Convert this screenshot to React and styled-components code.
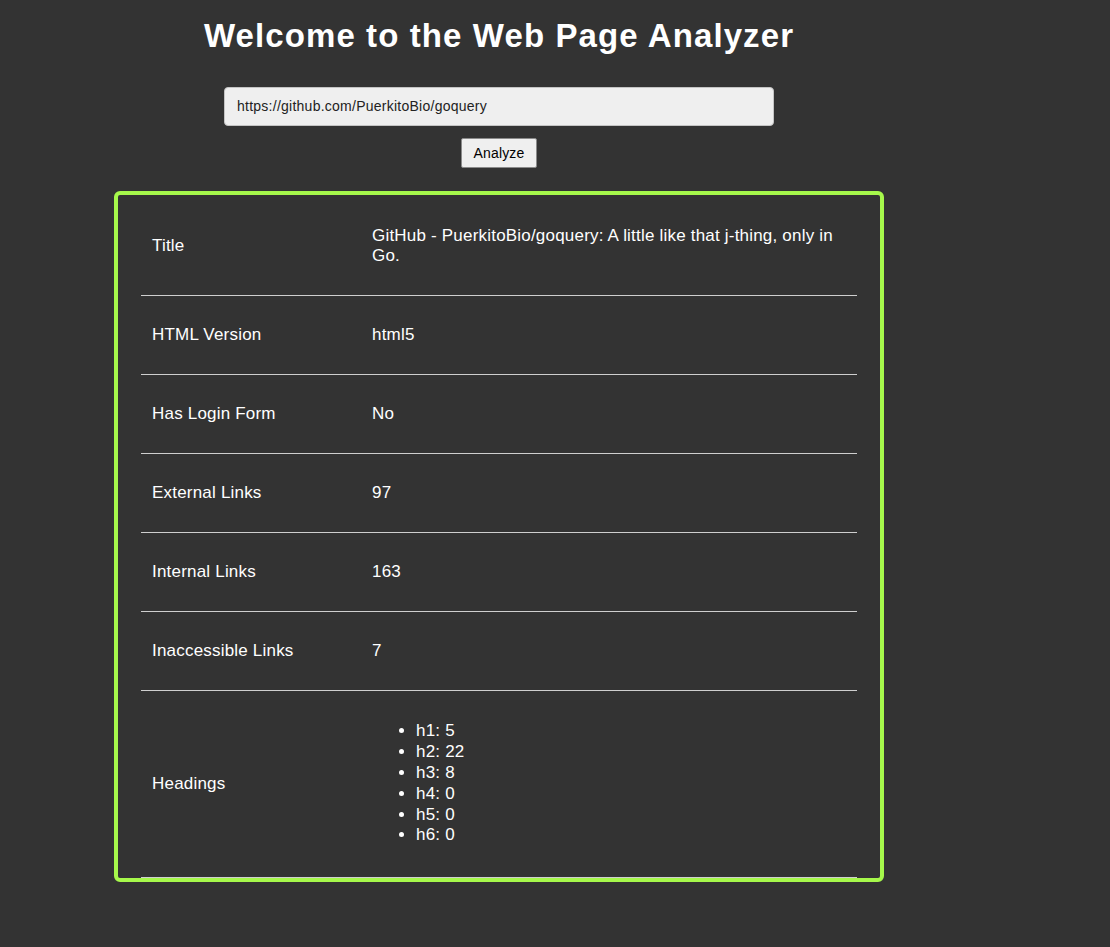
import React from "react";
import styled, { createGlobalStyle } from "styled-components";

const GlobalStyle = createGlobalStyle`
  html, body {
    margin: 0;
    padding: 0;
    background: #333333;
  }
  body {
    font-family: "Liberation Sans", Arial, Helvetica, sans-serif;
    color: #ffffff;
  }
`;

const Page = styled.div`
  width: 998px;
  min-height: 947px;
  display: flex;
  flex-direction: column;
  align-items: center;
  padding-top: 18px;
  box-sizing: border-box;
`;

const Heading = styled.h1`
  margin: 0;
  font-size: 33px;
  letter-spacing: 1.1px;
  font-weight: bold;
  line-height: 36.8px;
  color: #ffffff;
`;

const Form = styled.form`
  display: flex;
  flex-direction: column;
  align-items: center;
  gap: 12px;
  margin-top: 32px;
`;

const UrlInput = styled.input`
  box-sizing: border-box;
  width: 550px;
  height: 39px;
  padding: 0 12px;
  border: 1px solid #c4c4c4;
  border-radius: 4px;
  background: #efefef;
  color: #222222;
  font-family: "Liberation Sans", Arial, sans-serif;
  font-size: 14px;
  letter-spacing: 0.25px;
  outline: none;
`;

const Button = styled.button`
  box-sizing: border-box;
  height: 30px;
  padding: 0 12px;
  border: 1px solid #8a8a8a;
  border-radius: 2px;
  background: #efefef;
  color: #000000;
  font-family: "Liberation Sans", Arial, sans-serif;
  font-size: 14px;
  letter-spacing: 0.15px;
`;

const ResultBox = styled.div`
  box-sizing: border-box;
  width: 770px;
  margin-top: 23px;
  border: 4px solid #a6f84b;
  border-radius: 6px;
  padding: 2px 23px 0;
`;

const Table = styled.table`
  width: 100%;
  border-collapse: collapse;
  font-size: 17px;
  letter-spacing: 0.2px;
  line-height: 20px;
`;

const Row = styled.tr`
  border-bottom: 1px solid #cfcfcf;
`;

const Label = styled.td`
  width: 198px;
  padding: 29px 11px;
  vertical-align: middle;
  text-align: left;
`;

const Value = styled.td`
  padding: 29px 11px;
  vertical-align: middle;
  text-align: left;
`;

const List = styled.ul`
  margin: 1.6px 0;
  padding-left: 44px;
  list-style: disc;
`;

const Item = styled.li`
  line-height: 20.8px;
`;

const rows = [
  ["Title", "GitHub - PuerkitoBio/goquery: A little like that j-thing, only in Go."],
  ["HTML Version", "html5"],
  ["Has Login Form", "No"],
  ["External Links", "97"],
  ["Internal Links", "163"],
  ["Inaccessible Links", "7"],
];

const headings = [
  ["h1", 5],
  ["h2", 22],
  ["h3", 8],
  ["h4", 0],
  ["h5", 0],
  ["h6", 0],
];

export default function App() {
  return (
    <>
      <GlobalStyle />
      <Page>
        <Heading>Welcome to the Web Page Analyzer</Heading>
        <Form onSubmit={(e) => e.preventDefault()}>
          <UrlInput type="text" defaultValue="https://github.com/PuerkitoBio/goquery" />
          <Button type="submit">Analyze</Button>
        </Form>
        <ResultBox>
          <Table>
            <tbody>
              {rows.map(([k, v]) => (
                <Row key={k}>
                  <Label>{k}</Label>
                  <Value>{v}</Value>
                </Row>
              ))}
              <Row>
                <Label>Headings</Label>
                <Value>
                  <List>
                    {headings.map(([h, n]) => (
                      <Item key={h}>
                        {h}: {n}
                      </Item>
                    ))}
                  </List>
                </Value>
              </Row>
            </tbody>
          </Table>
        </ResultBox>
      </Page>
    </>
  );
}
